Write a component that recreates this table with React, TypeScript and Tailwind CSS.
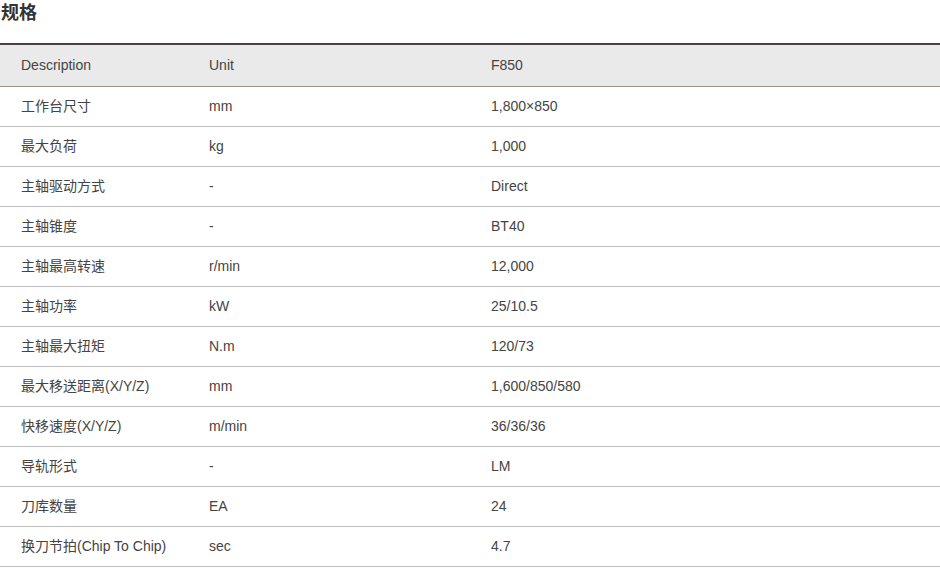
const ROWS: [string, string, string][] = [
  ["工作台尺寸", "mm", "1,800×850"],
  ["最大负荷", "kg", "1,000"],
  ["主轴驱动方式", "-", "Direct"],
  ["主轴锥度", "-", "BT40"],
  ["主轴最高转速", "r/min", "12,000"],
  ["主轴功率", "kW", "25/10.5"],
  ["主轴最大扭矩", "N.m", "120/73"],
  ["最大移送距离(X/Y/Z)", "mm", "1,600/850/580"],
  ["快移速度(X/Y/Z)", "m/min", "36/36/36"],
  ["导轨形式", "-", "LM"],
  ["刀库数量", "EA", "24"],
  ["换刀节拍(Chip To Chip)", "sec", "4.7"],
];

export default function App() {
  return (
    <div
      className="w-[940px] h-[573px] bg-white overflow-hidden text-[#444]"
      style={{ fontFamily: '"Liberation Sans", Arial, "Noto Sans CJK SC", sans-serif' }}
    >
      <h2 className="h-[43px] pl-[1px] pt-[2px] text-[18px] leading-[22px] font-bold text-[#333]">规格</h2>
      <div className="border-t-2 border-[#4b4242] text-[14px]">
        <div className="grid grid-cols-[189px_282px_1fr] h-[42px] items-center bg-[#eaeaea] border-b border-[#9a918d]">
          <div className="pl-[21px]">Description</div>
          <div className="pl-[20px]">Unit</div>
          <div className="pl-[20px]">F850</div>
        </div>
        {ROWS.map(([d, u, v]) => (
          <div
            key={d}
            className="grid grid-cols-[189px_282px_1fr] h-[40px] items-center border-b border-[#bdbdbd]"
          >
            <div className="pl-[21px]">{d}</div>
            <div className="pl-[20px]">{u}</div>
            <div className="pl-[20px]">{v}</div>
          </div>
        ))}
      </div>
    </div>
  );
}
